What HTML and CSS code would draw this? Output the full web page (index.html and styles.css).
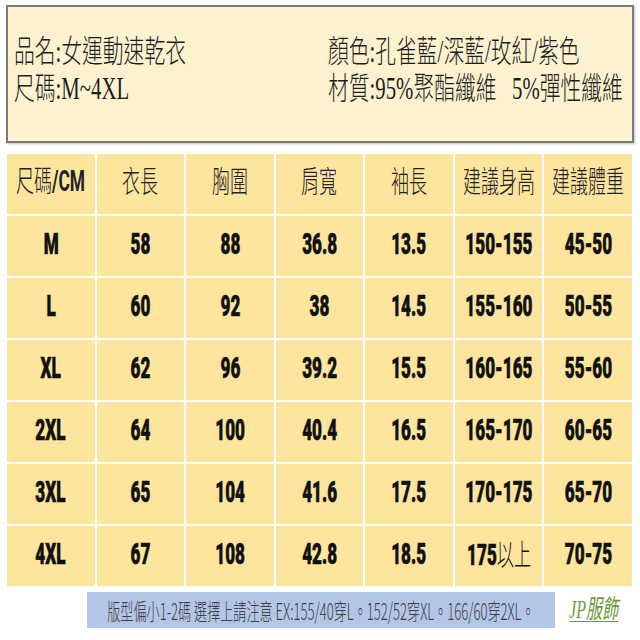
FILE: index.html
```html
<!DOCTYPE html>
<html lang="zh-Hant">
<head>
<meta charset="utf-8">
<title>女運動速乾衣 尺碼表</title>
<link rel="stylesheet" href="styles.css">
</head>
<body>
<div class="info">
  <div class="col col-left">
    <div class="line"><span class="squeeze">品名:女運動速乾衣</span></div>
    <div class="line"><span class="squeeze">尺碼:M~4XL</span></div>
  </div>
  <div class="col col-right">
    <div class="line"><span class="squeeze">顏色:孔雀藍/深藍/玫紅/紫色</span></div>
    <div class="line"><span class="squeeze">材質:95%聚酯纖維&nbsp;&nbsp;&nbsp;5%彈性纖維</span></div>
  </div>
</div>

<div class="sizes">
  <div class="cell"><span class="hd">尺碼<b class="bold">/CM</b></span></div>
  <div class="cell"><span class="hd">衣長</span></div>
  <div class="cell"><span class="hd">胸圍</span></div>
  <div class="cell"><span class="hd">肩寬</span></div>
  <div class="cell"><span class="hd">袖長</span></div>
  <div class="cell"><span class="hd">建議身高</span></div>
  <div class="cell"><span class="hd">建議體重</span></div>

  <div class="cell"><span class="num">M</span></div>
  <div class="cell"><span class="num">58</span></div>
  <div class="cell"><span class="num">88</span></div>
  <div class="cell"><span class="num">36.8</span></div>
  <div class="cell"><span class="num">13.5</span></div>
  <div class="cell"><span class="num">150-155</span></div>
  <div class="cell"><span class="num">45-50</span></div>

  <div class="cell"><span class="num">L</span></div>
  <div class="cell"><span class="num">60</span></div>
  <div class="cell"><span class="num">92</span></div>
  <div class="cell"><span class="num">38</span></div>
  <div class="cell"><span class="num">14.5</span></div>
  <div class="cell"><span class="num">155-160</span></div>
  <div class="cell"><span class="num">50-55</span></div>

  <div class="cell"><span class="num">XL</span></div>
  <div class="cell"><span class="num">62</span></div>
  <div class="cell"><span class="num">96</span></div>
  <div class="cell"><span class="num">39.2</span></div>
  <div class="cell"><span class="num">15.5</span></div>
  <div class="cell"><span class="num">160-165</span></div>
  <div class="cell"><span class="num">55-60</span></div>

  <div class="cell"><span class="num">2XL</span></div>
  <div class="cell"><span class="num">64</span></div>
  <div class="cell"><span class="num">100</span></div>
  <div class="cell"><span class="num">40.4</span></div>
  <div class="cell"><span class="num">16.5</span></div>
  <div class="cell"><span class="num">165-170</span></div>
  <div class="cell"><span class="num">60-65</span></div>

  <div class="cell"><span class="num">3XL</span></div>
  <div class="cell"><span class="num">65</span></div>
  <div class="cell"><span class="num">104</span></div>
  <div class="cell"><span class="num">41.6</span></div>
  <div class="cell"><span class="num">17.5</span></div>
  <div class="cell"><span class="num">170-175</span></div>
  <div class="cell"><span class="num">65-70</span></div>

  <div class="cell"><span class="num">4XL</span></div>
  <div class="cell"><span class="num">67</span></div>
  <div class="cell"><span class="num">108</span></div>
  <div class="cell"><span class="num">42.8</span></div>
  <div class="cell"><span class="num">18.5</span></div>
  <div class="cell"><span class="num">175<span class="thin">以上</span></span></div>
  <div class="cell"><span class="num">70-75</span></div>
</div>

<div class="footer">
  <div class="note"><span class="note-text">版型偏小1-2碼 選擇上請注意 EX:155/40穿L。152/52穿XL。166/60穿2XL。</span></div>
  <div class="brand"><span class="brand-text">JP服飾</span></div>
</div>
</body>
</html>
```

FILE: styles.css
```css
html, body {
  margin: 0;
  padding: 0;
  background: #ffffff;
}

body {
  width: 640px;
  height: 640px;
  overflow: hidden;
  font-family: "Liberation Serif", "Noto Sans CJK TC", serif;
  color: #1d1d1d;
}

/* ---------- top info box ---------- */
.info {
  box-sizing: border-box;
  margin: 5px 6px 0 6px;
  height: 138px;
  border: 2px solid #7b7b7b;
  background: #fdf2cf;
  box-shadow: 1px 1px 2px rgba(0, 0, 0, 0.25);
  display: flex;
  align-items: center;
  padding: 0 0 8px 6px;
  overflow: hidden;
}

.col {
  display: flex;
  flex-direction: column;
}

.col-left {
  flex: 0 0 314px;
  width: 314px;
}

.col-right {
  flex: 0 0 auto;
}

.line {
  height: 37px;
  line-height: 37px;
  white-space: nowrap;
  font-size: 31px;
  font-weight: 300;
}

.squeeze {
  display: inline-block;
  transform: scaleX(0.67);
  transform-origin: left center;
}

/* ---------- size table ---------- */
.sizes {
  margin: 11px 8px 0 7px;
  display: grid;
  grid-template-columns: repeat(7, minmax(0, 1fr));
  grid-auto-rows: 60px;
  gap: 2px;
  background: #ffffff;
}

.cell {
  background: #fde59e;
  display: flex;
  align-items: center;
  justify-content: center;
  white-space: nowrap;
  overflow: visible;
  min-width: 0;
}

.hd {
  display: inline-block;
  flex: none;
  font-family: "Noto Sans CJK TC", sans-serif;
  font-weight: 300;
  font-size: 30px;
  line-height: 1;
  color: #222222;
  transform: scaleX(0.6);
  margin-top: -10px;
}

.bold {
  font-family: "Roboto", "DejaVu Sans", sans-serif;
  font-weight: 700;
  font-size: 29px;
}

.num {
  display: inline-block;
  flex: none;
  font-family: "Roboto", "DejaVu Sans", sans-serif;
  font-weight: 900;
  font-size: 30px;
  line-height: 1;
  color: #111111;
  transform: scaleX(0.57);
  margin-top: -5px;
  -webkit-text-stroke: 0.6px #111111;
}

.thin {
  font-family: "Noto Sans CJK TC", sans-serif;
  font-weight: 300;
  font-size: 30px;
  -webkit-text-stroke: 0;
}

/* ---------- footer ---------- */
.footer {
  margin-top: 6px;
  display: flex;
  align-items: center;
}

.note {
  flex: none;
  margin-left: 87px;
  width: 468px;
  height: 36px;
  background: #b4c6e7;
  display: flex;
  align-items: center;
  justify-content: center;
  overflow: visible;
  white-space: nowrap;
}

.note-text {
  display: inline-block;
  flex: none;
  font-family: "Noto Sans CJK TC", sans-serif;
  font-weight: 300;
  font-size: 23px;
  line-height: 1;
  color: #3f3f3f;
  transform: scaleX(0.57);
}

.brand {
  margin-left: 14px;
  width: 50px;
  display: flex;
  justify-content: center;
  white-space: nowrap;
}

.brand-text {
  display: inline-block;
  flex: none;
  font-family: "Liberation Serif", "Noto Sans CJK TC", serif;
  font-style: italic;
  font-size: 26px;
  line-height: 1;
  color: #6b9a3c;
  text-decoration: underline;
  text-decoration-thickness: 1px;
  text-underline-offset: 3px;
  transform: scaleX(0.62);
}
```
